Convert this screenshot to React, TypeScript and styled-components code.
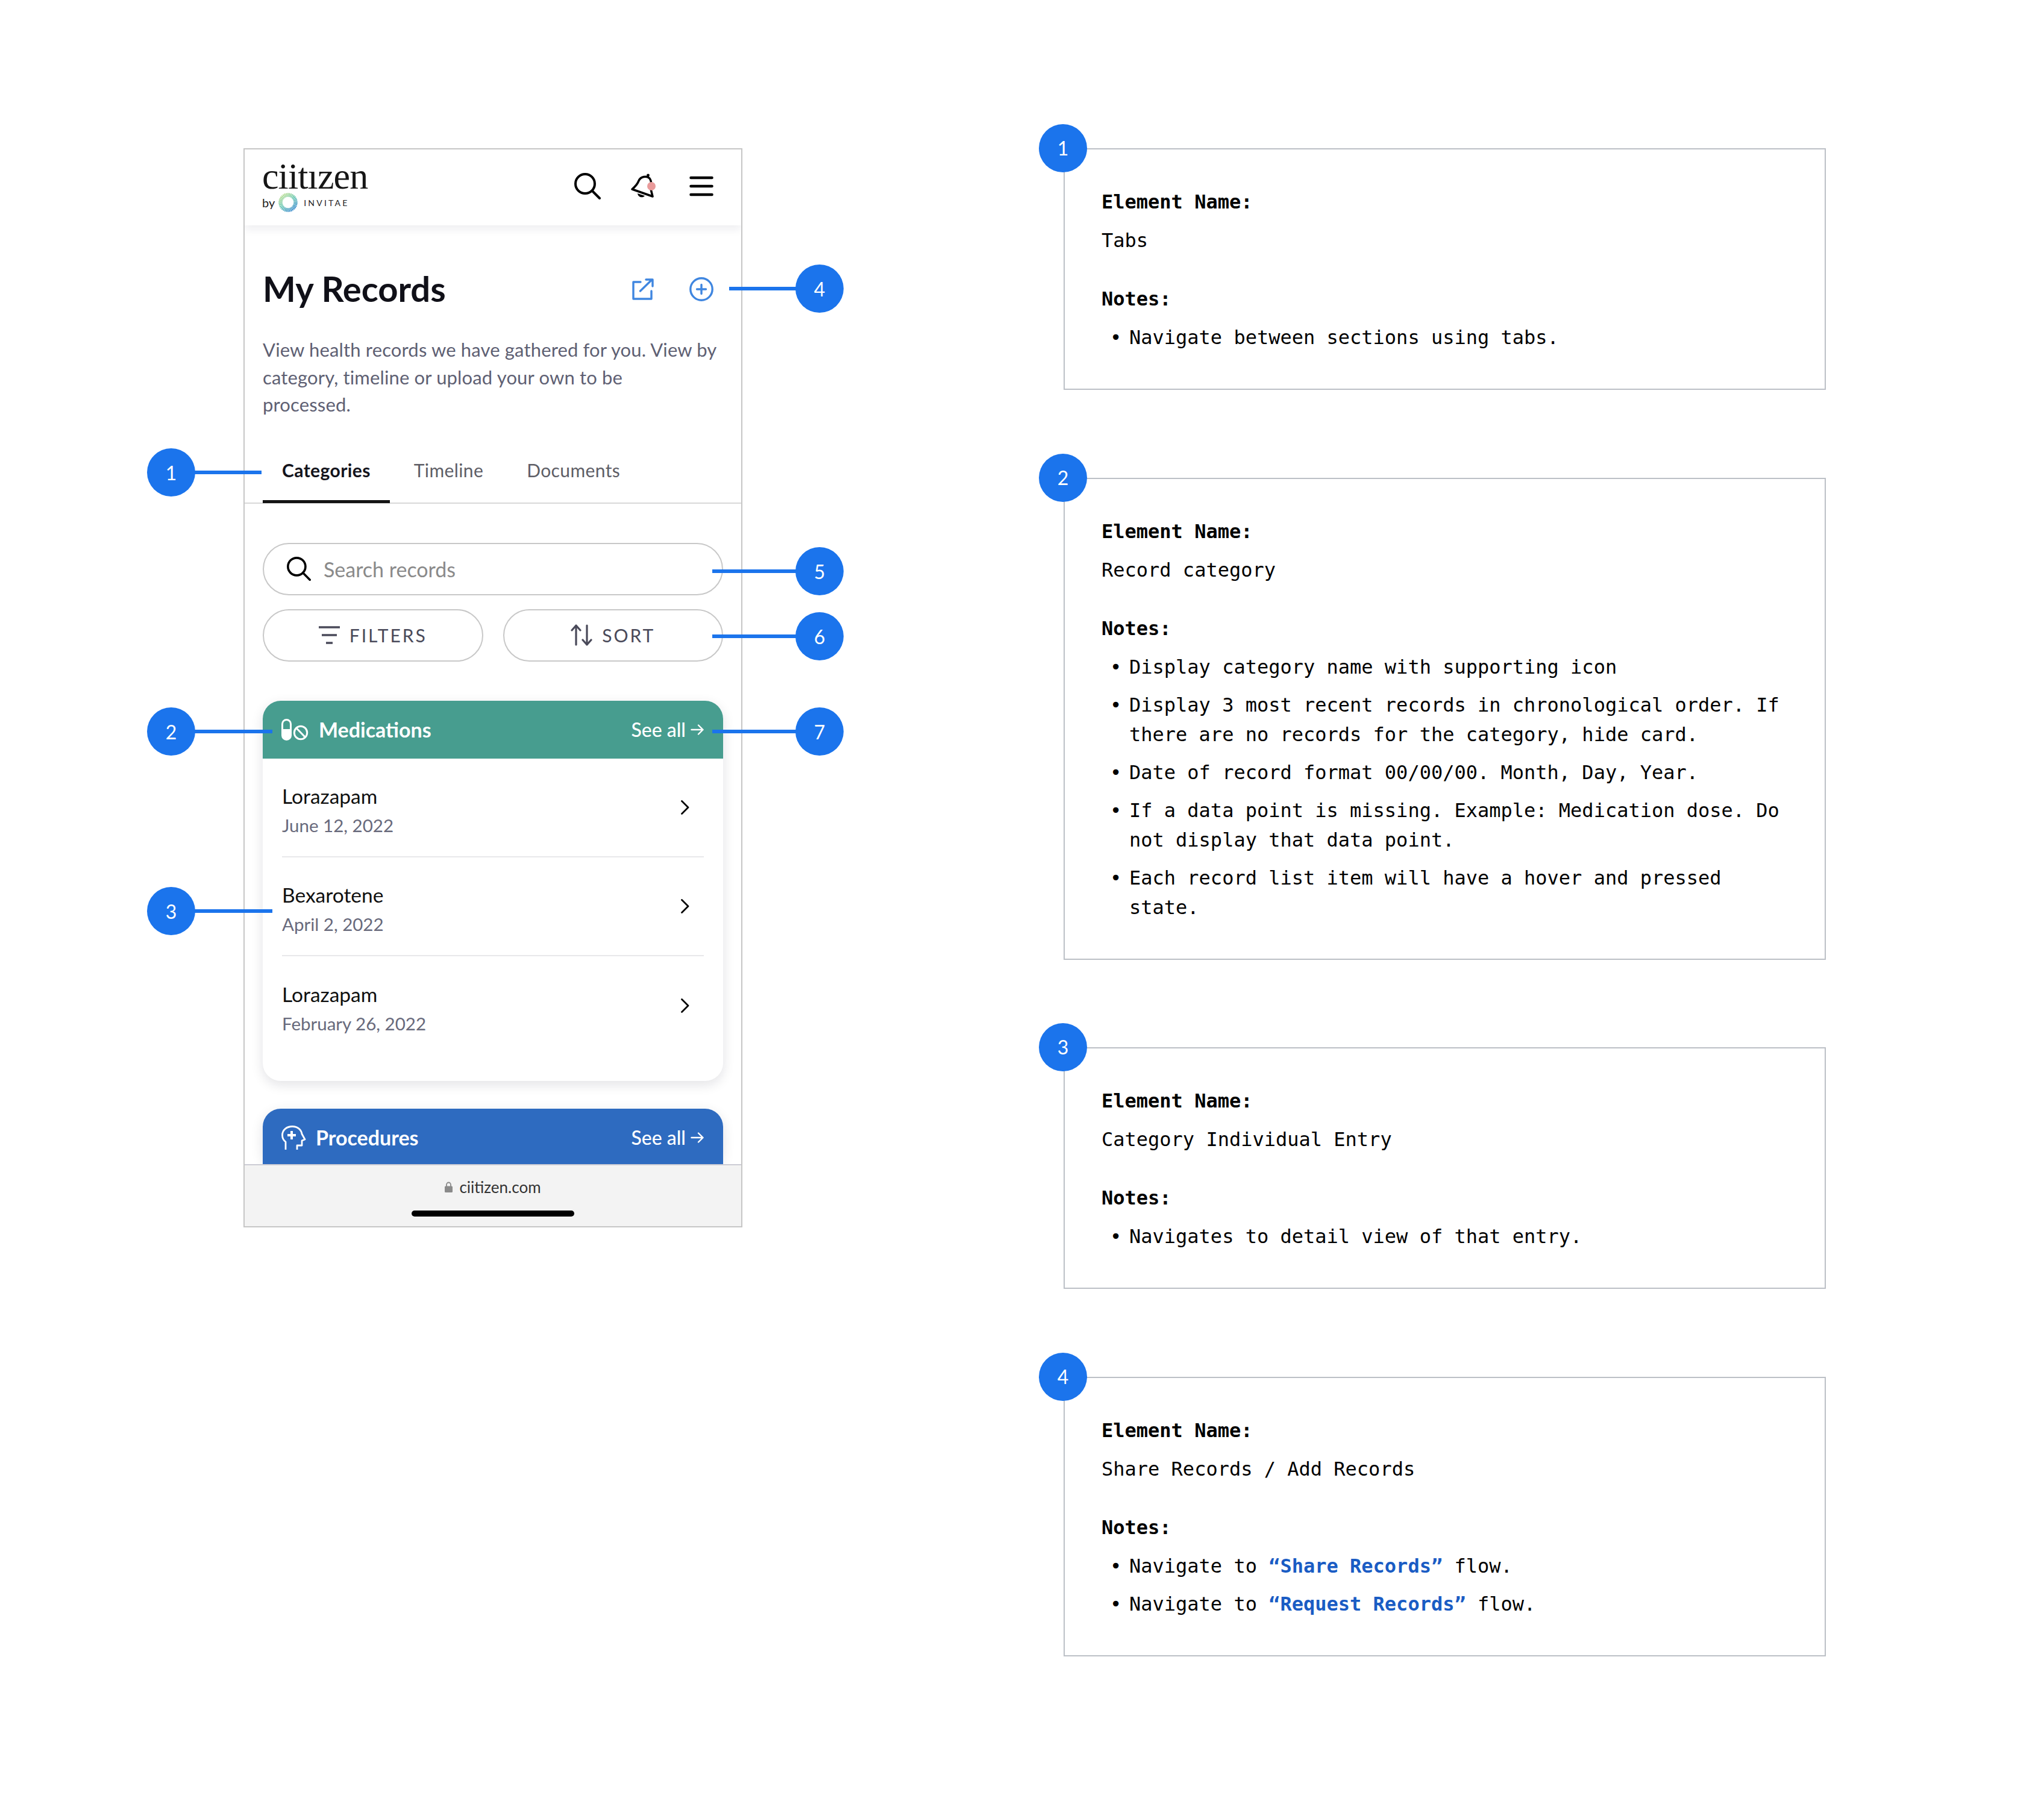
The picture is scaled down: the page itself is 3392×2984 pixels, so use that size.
import React from "react";
import styled, { createGlobalStyle } from "styled-components";

const GlobalStyle = createGlobalStyle`
  html, body {
    margin: 0;
    padding: 0;
    background: #fff;
  }
  * {
    box-sizing: border-box;
  }
`;

const records = [
  { name: "Lorazapam", date: "June 12, 2022" },
  { name: "Bexarotene", date: "April 2, 2022" },
  { name: "Lorazapam", date: "February 26, 2022" },
];

const callouts = [
  { n: 1, x: 284, y: 784, from: 284, to: 434 },
  { n: 2, x: 284, y: 1214, from: 284, to: 452 },
  { n: 3, x: 284, y: 1512, from: 284, to: 452 },
  { n: 4, x: 1360, y: 479, from: 1210, to: 1360 },
  { n: 5, x: 1360, y: 948, from: 1182, to: 1360 },
  { n: 6, x: 1360, y: 1056, from: 1182, to: 1360 },
  { n: 7, x: 1360, y: 1214, from: 1182, to: 1360 },
];

const SearchIcon = ({ size = 44 }: { size?: number }) => (
  <svg width={size} height={size} viewBox="0 0 44 44" fill="none" stroke="#000" strokeWidth="4" strokeLinecap="round">
    <circle cx="18" cy="18" r="16" />
    <path d="M29.5 29.5L42 42" />
  </svg>
);

const BellIcon = () => (
  <svg width="42" height="42" viewBox="0 0 42 42" fill="none" stroke="#000" strokeWidth="3.5" strokeLinejoin="round">
    <path d="M2 26C8 21 11 17 13 12C16 5 26 3 31 8C35 13 34 20 33 26L36 38Z" />
    <circle cx="28.5" cy="3" r="2.4" fill="#000" stroke="none" />
    <path d="M11 33C12 40 20 41 23 37Z" fill="#000" stroke="none" />
    <circle cx="34" cy="21" r="7" fill="#e99a9a" stroke="none" />
  </svg>
);

const MenuIcon = () => (
  <svg width="40" height="34" viewBox="0 0 40 34" fill="none" stroke="#000" strokeWidth="4.5" strokeLinecap="round">
    <path d="M2.5 3H37.5M2.5 17H37.5M2.5 31H37.5" />
  </svg>
);

const ShareIcon = () => (
  <svg width="36" height="36" viewBox="0 0 36 36" fill="none" stroke="#3f86e0" strokeWidth="3.4" strokeLinecap="round" strokeLinejoin="round">
    <path d="M14 6H2V34H32V21" />
    <path d="M13.5 21L33 2M23 2H34V13" />
  </svg>
);

const PlusIcon = () => (
  <svg width="40" height="40" viewBox="0 0 40 40" fill="none" stroke="#3f86e0" strokeWidth="3.4" strokeLinecap="round">
    <circle cx="20" cy="20" r="18.2" />
    <path d="M12.5 20H27.5M20 12.5V27.5" />
  </svg>
);

const FilterIcon = () => (
  <svg width="35" height="30" viewBox="0 0 35 30" fill="none" stroke="#4a4a5a" strokeWidth="3.6">
    <path d="M0 2H35M5 15H30M12 28H23" />
  </svg>
);

const SortIcon = () => (
  <svg width="36" height="36" viewBox="0 0 36 36" fill="none" stroke="#4a4a5a" strokeWidth="3.2" strokeLinecap="round" strokeLinejoin="round">
    <path d="M9 34V2M2 10L9 2L16 10" />
    <path d="M27 2V34M20 26L27 34L34 26" />
  </svg>
);

const PillIcon = () => (
  <svg width="46" height="36" viewBox="0 0 46 36" fill="none" stroke="#fff">
    <rect x="1.5" y="1.5" width="14" height="33" rx="7" strokeWidth="3" />
    <path d="M1.5 17H15.5V27.5A7 7 0 0 1 1.5 27.5Z" fill="#fff" strokeWidth="0" />
    <circle cx="32" cy="23" r="10.7" strokeWidth="3" />
    <path d="M25 15.5L39.5 30.5" strokeWidth="3" />
  </svg>
);

const HeadIcon = () => (
  <svg width="41" height="40" viewBox="0 0 41 40" fill="none" stroke="#fff" strokeWidth="2.8" strokeLinejoin="round">
    <path d="M7 40V27C3 24 1.5 20 1.5 16C1.5 7 9 1.5 18 1.5C27 1.5 33 7 34 14L39 23L34 25V33H26V40" />
    <path d="M17 9V23M10 16H24" strokeWidth="4" />
  </svg>
);

const ChevronIcon = () => (
  <svg width="15" height="24" viewBox="0 0 15 24" fill="none" stroke="#000" strokeWidth="2.8" strokeLinecap="round" strokeLinejoin="round">
    <path d="M2.5 1.5L13 12L2.5 22.5" />
  </svg>
);

const ArrowIcon = () => (
  <svg width="22" height="18" viewBox="0 0 22 18" fill="none" stroke="#fff" strokeWidth="2.4" strokeLinecap="round" strokeLinejoin="round">
    <path d="M1.5 9H20.5M13 1.5L20.5 9L13 16.5" />
  </svg>
);

const LockIcon = () => (
  <svg width="13" height="18" viewBox="0 0 13 18" fill="none">
    <path d="M3 8V5a3.5 3.5 0 0 1 7 0V8" stroke="#8a8a8a" strokeWidth="1.8" />
    <rect x="0" y="7.5" width="13" height="10.5" rx="1.5" fill="#8a8a8a" />
  </svg>
);

const RingLogo = () => (
  <svg width="32" height="32" viewBox="0 0 32 32" fill="none">
    <defs>
      <linearGradient id="ring" x1="0.1" y1="0" x2="0.8" y2="1">
        <stop offset="0" stopColor="#b6dc8a" />
        <stop offset="0.5" stopColor="#5cc3ad" />
        <stop offset="1" stopColor="#2f86c9" />
      </linearGradient>
    </defs>
    <circle cx="16" cy="16" r="12.5" stroke="url(#ring)" strokeWidth="6.5" strokeDasharray="1.6 0.7" />
  </svg>
);

const Notes: React.FC<{
  n: number;
  name: string;
  children: React.ReactNode;
}> = ({ n, name, children }) => (
  <NoteBox>
    <Pin $x={-3} $y={-2}>{n}</Pin>
    <NoteLabel>Element Name:</NoteLabel>
    <NoteValue>{name}</NoteValue>
    <NoteLabel>Notes:</NoteLabel>
    <NoteList>{children}</NoteList>
  </NoteBox>
);

const App: React.FC = () => {
  return (
    <Page>
      <GlobalStyle />
      <Phone>
        <AppHeader>
          <Logo>
            <LogoWord>ciitızen</LogoWord>
            <LogoSub>
              <LogoBy>by</LogoBy>
              <RingLogo />
              <LogoInvitae>INVITAE</LogoInvitae>
            </LogoSub>
          </Logo>
          <HeaderIcons>
            <SearchIcon />
            <BellIcon />
            <MenuSlot>
              <MenuIcon />
            </MenuSlot>
          </HeaderIcons>
        </AppHeader>
        <TitleRow>
          <Title>My Records</Title>
          <TitleIcons>
            <ShareIcon />
            <PlusIcon />
          </TitleIcons>
        </TitleRow>
        <Description>
          View health records we have gathered for you. View by
          <br />
          category, timeline or upload your own to be
          <br />
          processed.
        </Description>
        <Tabs>
          <Tab $active>Categories</Tab>
          <Tab>Timeline</Tab>
          <Tab>Documents</Tab>
        </Tabs>
        <Body>
          <SearchField>
            <SearchIcon size={40} />
            <SearchText>Search records</SearchText>
          </SearchField>
          <ButtonRow>
            <PillButton>
              <FilterIcon />
              FILTERS
            </PillButton>
            <PillButton>
              <SortIcon />
              SORT
            </PillButton>
          </ButtonRow>
          <CategoryCard>
            <CategoryHeader $color="#479d8f">
              <CategoryTitle>
                <PillIcon />
                Medications
              </CategoryTitle>
              <SeeAll>
                See all <ArrowIcon />
              </SeeAll>
            </CategoryHeader>
            <RecordList>
              {records.map((r, i) => (
                <RecordRow key={i}>
                  <RecordText>
                    <RecordName>{r.name}</RecordName>
                    <RecordDate>{r.date}</RecordDate>
                  </RecordText>
                  <ChevronIcon />
                </RecordRow>
              ))}
            </RecordList>
          </CategoryCard>
          <CategoryCard>
            <CategoryHeader $color="#2e6bc0">
              <CategoryTitle>
                <HeadIcon />
                Procedures
              </CategoryTitle>
              <SeeAll>
                See all <ArrowIcon />
              </SeeAll>
            </CategoryHeader>
          </CategoryCard>
        </Body>
        <BrowserBar>
          <UrlLine>
            <LockIcon />
            ciitizen.com
          </UrlLine>
          <HomeBar />
        </BrowserBar>
      </Phone>

      <NotesColumn>
        <Notes n={1} name="Tabs">
          <NoteItem>Navigate between sections using tabs.</NoteItem>
        </Notes>
        <Notes n={2} name="Record category">
          <NoteItem>Display category name with supporting icon</NoteItem>
          <NoteItem>
            Display 3 most recent records in chronological order. If there are
            no records for the category, hide card.
          </NoteItem>
          <NoteItem>Date of record format 00/00/00. Month, Day, Year.</NoteItem>
          <NoteItem>
            If a data point is missing. Example: Medication dose. Do not display
            that data point.
          </NoteItem>
          <NoteItem>
            Each record list item will have a hover and pressed state.
          </NoteItem>
        </Notes>
        <Notes n={3} name="Category Individual Entry">
          <NoteItem>Navigates to detail view of that entry.</NoteItem>
        </Notes>
        <Notes n={4} name="Share Records / Add Records">
          <NoteItem>
            <span>
              Navigate to <FlowLink>“Share Records”</FlowLink> flow.
            </span>
          </NoteItem>
          <NoteItem>
            <span>
              Navigate to <FlowLink>“Request Records”</FlowLink> flow.
            </span>
          </NoteItem>
        </Notes>
      </NotesColumn>

      {callouts.map((c) => (
        <React.Fragment key={c.n}>
          <Leader $left={c.from} $top={c.y} $width={c.to - c.from} />
          <Pin $x={c.x} $y={c.y}>{c.n}</Pin>
        </React.Fragment>
      ))}
    </Page>
  );
};

const Page = styled.div`
  position: relative;
  width: 3392px;
  height: 2984px;
  padding: 246px 0 0 404px;
  display: flex;
  align-items: flex-start;
  gap: 533px;
  background: #fff;
  font-family: Lato, "Noto Sans", sans-serif;
  overflow: hidden;
`;

const Phone = styled.div`
  width: 828px;
  height: 1791px;
  flex: none;
  display: flex;
  flex-direction: column;
  border: 2px solid #c6c6c6;
  background: #fff;
  overflow: hidden;
`;

const AppHeader = styled.header`
  height: 126px;
  flex: none;
  display: flex;
  align-items: center;
  justify-content: space-between;
  padding: 0 46px 4px 29px;
  background: #fff;
  box-shadow: 0 6px 14px rgba(30, 30, 60, 0.08);
`;

const Logo = styled.div`
  display: flex;
  flex-direction: column;
  margin-top: -2px;
`;

const LogoWord = styled.div`
  font-family: "Liberation Serif", serif;
  font-size: 62px;
  line-height: 56px;
  letter-spacing: -0.9px;
  color: #161616;
`;

const LogoSub = styled.div`
  display: flex;
  align-items: center;
  gap: 6px;
  height: 32px;
`;

const LogoBy = styled.span`
  font-size: 20px;
  font-weight: 400;
  color: #222;
`;

const LogoInvitae = styled.span`
  font-size: 14px;
  letter-spacing: 3.2px;
  color: #222;
  margin-left: 4px;
`;

const HeaderIcons = styled.div`
  display: flex;
  align-items: center;
  gap: 50px;
`;

const MenuSlot = styled.div`
  display: flex;
  margin-left: 5px;
`;

const TitleRow = styled.div`
  flex: none;
  display: flex;
  align-items: center;
  justify-content: space-between;
  height: 60px;
  margin-top: 76px;
  padding: 0 46px 0 30px;
`;

const Title = styled.h1`
  margin: -3px 0 0 0;
  font-size: 58px;
  font-weight: 700;
  line-height: 60px;
  color: #101018;
`;

const TitleIcons = styled.div`
  display: flex;
  align-items: center;
  gap: 59px;
`;

const Description = styled.p`
  flex: none;
  margin: 48px 0 0;
  padding: 0 30px;
  font-size: 31px;
  letter-spacing: 0.15px;
  line-height: 45.5px;
  color: #5e6073;
`;

const Tabs = styled.nav`
  flex: none;
  display: flex;
  align-items: stretch;
  gap: 8px;
  height: 106px;
  margin-top: 35px;
  padding: 0 30px;
  border-bottom: 2px solid #d8d8d8;
`;

const Tab = styled.div<{ $active?: boolean }>`
  display: flex;
  align-items: center;
  padding: 0 32px;
  height: 105px;
  font-size: 30px;
  letter-spacing: 0.4px;
  font-weight: ${(p) => (p.$active ? 700 : 400)};
  color: ${(p) => (p.$active ? "#14141c" : "#5e5e66")};
  border-bottom: 5px solid ${(p) => (p.$active ? "#141414" : "transparent")};
`;

const Body = styled.div`
  flex: 1;
  min-height: 0;
  overflow: hidden;
  padding: 65px 30px 0 30px;
  display: flex;
  flex-direction: column;
`;

const SearchField = styled.div`
  flex: none;
  height: 87px;
  display: flex;
  align-items: center;
  gap: 21px;
  padding: 0 38px;
  border: 2.5px solid #c8c8c8;
  border-radius: 44px;
`;

const SearchText = styled.span`
  font-size: 34px;
  color: #8a8a8a;
`;

const ButtonRow = styled.div`
  flex: none;
  display: grid;
  grid-template-columns: 1fr 1fr;
  gap: 33px;
  margin-top: 23px;
`;

const PillButton = styled.div`
  height: 87px;
  display: flex;
  align-items: center;
  justify-content: center;
  gap: 16px;
  border: 2.5px solid #c8c8c8;
  border-radius: 44px;
  font-size: 30px;
  letter-spacing: 3px;
  color: #4a4a5a;
`;

const CategoryCard = styled.section`
  flex: none;
  margin-top: 65px;
  border-radius: 30px;
  background: #fff;
  box-shadow: 0 6px 20px rgba(20, 20, 40, 0.12);

  & + & {
    margin-top: 46px;
  }
`;

const CategoryHeader = styled.div<{ $color: string }>`
  height: 96px;
  display: flex;
  align-items: center;
  justify-content: space-between;
  padding: 0 32px 0 31px;
  border-radius: 30px 30px 0 0;
  color: #fff;
  background: ${(p) => p.$color};
`;

const CategoryTitle = styled.div`
  display: flex;
  align-items: center;
  gap: 16px;
  font-size: 34px;
  font-weight: 700;
`;

const SeeAll = styled.div`
  display: flex;
  align-items: center;
  gap: 8px;
  font-size: 32px;
  font-weight: 500;
`;

const RecordList = styled.div`
  padding: 0 32px 43px 32px;
`;

const RecordRow = styled.div`
  height: 164px;
  display: flex;
  align-items: center;
  justify-content: space-between;
  padding-right: 24px;
  border-bottom: 2px solid #e8e8ea;

  &:last-child {
    border-bottom: none;
  }
`;

const RecordText = styled.div`
  margin-top: 12px;
`;

const RecordName = styled.div`
  font-size: 33.5px;
  line-height: 44px;
  color: #101010;
`;

const RecordDate = styled.div`
  margin-top: 5px;
  font-size: 29.5px;
  line-height: 44px;
  color: #686a7c;
`;

const BrowserBar = styled.footer`
  position: relative;
  flex: none;
  height: 103px;
  display: flex;
  flex-direction: column;
  align-items: center;
  padding-top: 20px;
  background: #f3f3f3;
  border-top: 2px solid #ccccd4;
`;

const UrlLine = styled.div`
  display: flex;
  align-items: center;
  gap: 11px;
  font-size: 26px;
  line-height: 32px;
  color: #333;
`;

const HomeBar = styled.div`
  width: 270px;
  height: 10px;
  margin-top: 23px;
  border-radius: 5px;
  background: #000;
`;

const NotesColumn = styled.div`
  width: 1265px;
  flex: none;
  display: flex;
  flex-direction: column;
  gap: 145.5px;
`;

const NoteBox = styled.div`
  position: relative;
  padding: 62px 60px 60px 61px;
  border: 2px solid #bcc0c6;
  font-family: "DejaVu Sans Mono", monospace;
  font-size: 32px;
  line-height: 50px;
  color: #000;
`;

const NoteLabel = styled.div`
  font-weight: 700;
`;

const NoteValue = styled.div`
  margin: 14px 0 47px;
`;

const NoteList = styled.ul`
  list-style: none;
  margin: 15px 0 0;
  padding: 0;
  display: flex;
  flex-direction: column;
  gap: 14px;
`;

const NoteItem = styled.li`
  position: relative;
  padding-left: 46px;
  line-height: 49px;

  &::before {
    content: "•";
    position: absolute;
    left: 14px;
  }
`;

const FlowLink = styled.b`
  color: #1a5cc4;
`;

const Pin = styled.div<{ $x: number; $y: number }>`
  position: absolute;
  left: ${(p) => p.$x - 40}px;
  top: ${(p) => p.$y - 40}px;
  width: 80px;
  height: 80px;
  display: flex;
  align-items: center;
  justify-content: center;
  border-radius: 50%;
  background: #1b74ec;
  color: #fff;
  font-family: Lato, sans-serif;
  font-size: 32px;
  font-weight: 400;
`;

const Leader = styled.div<{ $left: number; $top: number; $width: number }>`
  position: absolute;
  left: ${(p) => p.$left}px;
  top: ${(p) => p.$top - 3}px;
  width: ${(p) => p.$width}px;
  height: 6px;
  background: #1b74ec;
`;

export default App;
